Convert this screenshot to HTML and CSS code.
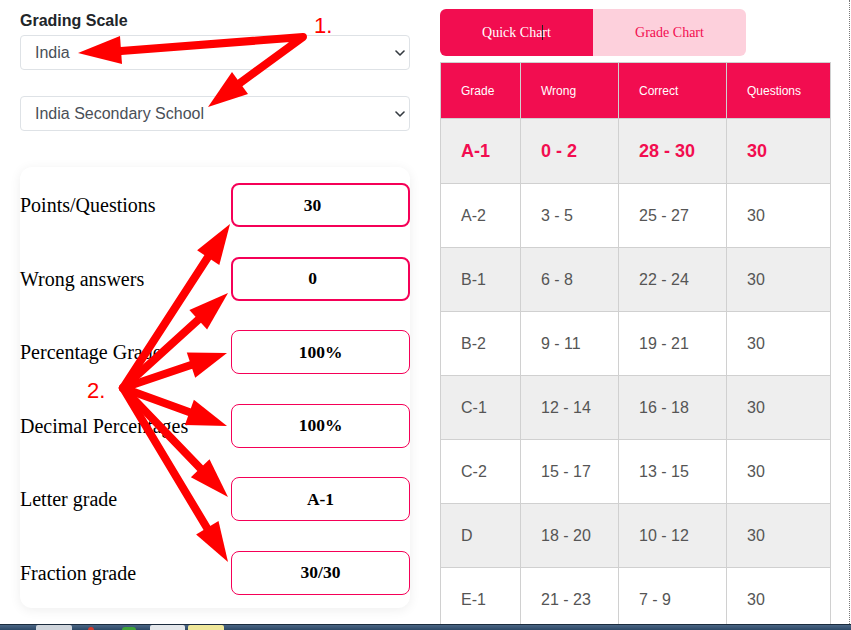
FILE: index.html
```html
<!DOCTYPE html>
<html lang="en">
<head>
<meta charset="utf-8">
<title>Grading Scale</title>
<link rel="stylesheet" href="styles.css">
</head>
<body>
<div class="page">
  <div class="left">
    <div class="label">Grading Scale</div>
    <div class="select-wrap">
      <select class="select"><option>India</option></select>
      <svg class="chev" width="10" height="6" viewBox="0 0 10 6"><polyline points="1,1 5,5 9,1" fill="none" stroke="#343a40" stroke-width="1.6" stroke-linecap="round" stroke-linejoin="round"/></svg>
    </div>
    <div class="select-wrap second">
      <select class="select"><option>India Secondary School</option></select>
      <svg class="chev" width="10" height="6" viewBox="0 0 10 6"><polyline points="1,1 5,5 9,1" fill="none" stroke="#343a40" stroke-width="1.6" stroke-linecap="round" stroke-linejoin="round"/></svg>
    </div>
    <div class="card">
      <div class="row"><span class="rlabel">Points/Questions</span><div class="field strong">30</div></div>
      <div class="row"><span class="rlabel">Wrong answers</span><div class="field strong">0</div></div>
      <div class="row"><span class="rlabel">Percentage Grade</span><div class="field">100%</div></div>
      <div class="row"><span class="rlabel">Decimal Percentages</span><div class="field">100%</div></div>
      <div class="row"><span class="rlabel">Letter grade</span><div class="field">A-1</div></div>
      <div class="row"><span class="rlabel">Fraction grade</span><div class="field">30/30</div></div>
    </div>
  </div>
  <div class="right">
    <div class="tabs">
      <div class="tab active">Quick Cha<span class="caret"></span>rt</div>
      <div class="tab">Grade Chart</div>
    </div>
    <table class="chart">
      <colgroup><col class="c1"><col class="c2"><col class="c3"><col class="c4"></colgroup>
      <thead>
        <tr><th>Grade</th><th>Wrong</th><th>Correct</th><th>Questions</th></tr>
      </thead>
      <tbody>
        <tr class="hl"><td>A-1</td><td>0 - 2</td><td>28 - 30</td><td>30</td></tr>
        <tr><td>A-2</td><td>3 - 5</td><td>25 - 27</td><td>30</td></tr>
        <tr class="alt"><td>B-1</td><td>6 - 8</td><td>22 - 24</td><td>30</td></tr>
        <tr><td>B-2</td><td>9 - 11</td><td>19 - 21</td><td>30</td></tr>
        <tr class="alt"><td>C-1</td><td>12 - 14</td><td>16 - 18</td><td>30</td></tr>
        <tr><td>C-2</td><td>15 - 17</td><td>13 - 15</td><td>30</td></tr>
        <tr class="alt"><td>D</td><td>18 - 20</td><td>10 - 12</td><td>30</td></tr>
        <tr><td>E-1</td><td>21 - 23</td><td>7 - 9</td><td>30</td></tr>
      </tbody>
    </table>
  </div>
  <svg class="annot" width="851" height="630" viewBox="0 0 851 630">
    <g stroke="#ff0000" stroke-width="8" stroke-linecap="round" stroke-linejoin="round" fill="none">
      <polyline points="121,51 303,37 240,83"/>
      <line x1="123" y1="388" x2="208" y2="257"/>
      <line x1="123" y1="388" x2="198" y2="320"/>
      <line x1="123" y1="388" x2="191" y2="365"/>
      <line x1="123" y1="388" x2="189" y2="412"/>
      <line x1="123" y1="388" x2="200" y2="468"/>
      <line x1="123" y1="388" x2="207" y2="528"/>
    </g>
    <g fill="#ff0000">
      <polygon points="78,53 122,64 120,36"/>
      <polygon points="208,107 232,72 248,94"/>
      <polygon points="230,224 219.3,265.1 197.1,250.3"/>
      <polygon points="228,293 207.1,329.5 189.4,310.1"/>
      <polygon points="227,353 195.2,377.8 186.8,352.4"/>
      <polygon points="227,426 184.9,424.9 193.9,399.8"/>
      <polygon points="228,497 190.9,477.2 209.5,459.2"/>
      <polygon points="228,562 196.1,534.5 218.5,521.1"/>
    </g>
    <text x="314" y="33" class="num">1.</text>
    <text x="87" y="398" class="num">2.</text>
  </svg>
</div>
<div class="taskbar">
  <span class="tb b1"></span>
  <span class="dot red d1"></span>
  <span class="dot green d2"></span>
  <span class="tb b2"></span>
  <span class="tb b3"></span>
</div>
</body>
</html>
```

FILE: styles.css
```css
html, body {
  margin: 0;
  padding: 0;
  height: 100%;
  overflow: hidden;
  background: #fff;
}

body {
  font-family: "Liberation Serif", "Times New Roman", serif;
  color: #000;
}

.page {
  position: relative;
  box-sizing: border-box;
  width: 850px;
  height: 630px;
  padding-left: 20px;
  display: flex;
  gap: 30px;
  align-items: flex-start;
  border-right: 1px dotted #777;
}

.left {
  width: 390px;
  display: flex;
  flex-direction: column;
  padding-top: 10px;
}

.label {
  font-family: "Liberation Sans", Arial, sans-serif;
  font-weight: bold;
  font-size: 16px;
  line-height: 22px;
  color: #212529;
  margin-bottom: 3px;
}

.select-wrap {
  position: relative;
  height: 35px;
}

.select-wrap.second {
  margin-top: 26px;
}

.select {
  appearance: none;
  -webkit-appearance: none;
  box-sizing: border-box;
  width: 390px;
  height: 35px;
  border: 1px solid #dee2e6;
  border-radius: 4px;
  background: #fff;
  padding: 0 30px 0 14px;
  font-family: "Liberation Sans", Arial, sans-serif;
  font-size: 16px;
  color: #4a4f57;
  outline: none;
}

.chev {
  position: absolute;
  right: 5px;
  top: 15px;
  pointer-events: none;
}

.card {
  margin-top: 36px;
  width: 390px;
  box-sizing: border-box;
  padding: 16px 0 13px;
  border-radius: 12px;
  background: #fff;
  box-shadow: 0 2px 12px rgba(0, 0, 0, 0.07);
  display: flex;
  flex-direction: column;
  gap: 29.6px;
}

.row {
  display: flex;
  justify-content: space-between;
  align-items: center;
  height: 44px;
}

.rlabel {
  font-size: 20px;
  line-height: 24px;
  color: #000;
}

.field {
  box-sizing: border-box;
  width: 179px;
  height: 44px;
  border: 1px solid #f50057;
  border-radius: 8px;
  display: flex;
  align-items: center;
  justify-content: center;
  font-weight: bold;
  font-size: 17.5px;
  color: #000;
}

.field.strong {
  border-width: 2px;
  padding-right: 16px;
}

.right {
  width: 390px;
  padding-top: 9px;
  display: flex;
  flex-direction: column;
  gap: 6px;
}

.tabs {
  display: flex;
  width: 306px;
  height: 47px;
  border-radius: 6px;
  overflow: hidden;
}

.tab {
  flex: 1;
  display: flex;
  align-items: center;
  justify-content: center;
  font-size: 14px;
  background: #fdd0dc;
  color: #f20d50;
}

.tab.active {
  background: #f20d50;
  color: #fff;
}

.caret {
  display: inline-block;
  width: 1px;
  height: 15px;
  background: #222;
  margin: 0 -1px 0 0;
  vertical-align: -2px;
}

.chart {
  border-collapse: collapse;
  table-layout: fixed;
  width: 390px;
  font-family: "Liberation Sans", Arial, sans-serif;
}

.c1 { width: 80px; }
.c2 { width: 98px; }
.c3 { width: 108px; }
.c4 { width: 104px; }

.chart th,
.chart td {
  border: 1px solid #d0d0d0;
  text-align: left;
  padding: 0 0 0 20px;
  vertical-align: middle;
}

.chart th {
  background: #f20d50;
  color: #fff;
  font-weight: normal;
  font-size: 12px;
  height: 55px;
}

.chart td {
  font-size: 16px;
  color: #555;
  height: 63px;
}

.chart tr.hl td {
  background: #eeeeee;
  color: #f20d50;
  font-weight: bold;
  font-size: 18px;
  height: 64px;
}

.chart tr.alt td {
  background: #eeeeee;
}

.annot {
  position: absolute;
  left: 0;
  top: 0;
  pointer-events: none;
}

.num {
  font-family: "Liberation Sans", Arial, sans-serif;
  font-size: 22px;
  fill: #ff0000;
}

.taskbar {
  position: fixed;
  left: 0;
  bottom: 0;
  width: 851px;
  height: 5px;
  background: linear-gradient(#4a6685, #2d4866);
  border-top: 1px solid #1b2b3d;
}

.tb {
  position: absolute;
  top: 0;
  height: 5px;
  border-radius: 2px 2px 0 0;
}

.b1 { left: 36px; width: 36px; background: #cfd5dc; }
.b2 { left: 150px; width: 35px; background: #e4e7eb; }
.b3 { left: 188px; width: 36px; background: #efe79a; }

.dot {
  position: absolute;
  top: 2px;
  width: 6px;
  height: 3px;
  border-radius: 3px 3px 0 0;
}

.red { background: #d23b2e; }
.green { background: #3fa33a; }
.d1 { left: 88px; }
.d2 { left: 122px; width: 14px; }
```
